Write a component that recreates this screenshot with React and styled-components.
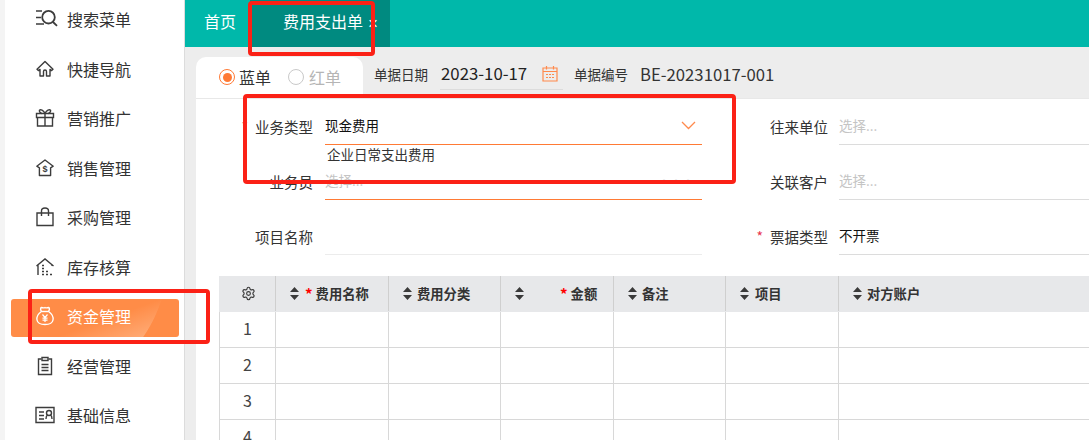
import React from "react";
import styled, { createGlobalStyle } from "styled-components";
import { Settings } from "lucide-react";

const Global = createGlobalStyle`
  html, body { margin: 0; padding: 0; height: 440px; overflow: hidden; background: #ededed; }
  * { box-sizing: border-box; }
  body { font-family: "Noto Sans CJK SC", "Liberation Sans", sans-serif; color: #333; }
`;

const Shell = styled.div`
  position: relative;
  display: flex;
  width: 1089px;
  height: 440px;
  overflow: hidden;
`;
const Sidebar = styled.aside`
  flex: 0 0 185px;
  height: 440px;
  border-left: 5px solid #f4f4f4;
  border-right: 1px solid #dcdcdc;
  background: #fff;
  overflow: hidden;
`;
const Menu = styled.nav`
  display: flex;
  flex-direction: column;
  margin-top: -4px;
  padding: 0 5px 0 6px;
`;
const MenuItem = styled.div`
  position: relative;
  display: flex;
  align-items: center;
  height: 49.5px;
  padding: 0 0 3px 24px;
  gap: 12px;
  font-size: 16px;
  color: ${(p) => (p.$active ? "#fff" : "#333")};
  &::before {
    content: "";
    display: ${(p) => (p.$active ? "block" : "none")};
    position: absolute;
    left: 0;
    right: 0;
    top: 5.5px;
    bottom: 5.5px;
    border-radius: 3px;
    background:
      radial-gradient(circle 137px at 20px -40px, transparent 99.4%, #ff8c47 100%),
      linear-gradient(160deg, #ff8c47 55%, #ffab76 88%);
  }
`;
const MenuIcon = styled.svg`
  position: relative;
  flex: 0 0 20px;
  width: 20px;
  height: 20px;
  fill: none;
  overflow: visible;
  stroke: ${(p) => (p.$active ? "#fff" : "#3c3c3c")};
  stroke-width: 1.4;
`;
const MenuText = styled.span`
  position: relative;
`;

const Main = styled.main`
  flex: 1;
  min-width: 0;
  display: flex;
  flex-direction: column;
`;
const TopBar = styled.header`
  flex: 0 0 46px;
  display: flex;
  background: #00b8aa;
  color: #fff;
  font-size: 16px;
`;
const HomeTab = styled.div`
  width: 65px;
  padding-left: 19px;
  line-height: 43px;
`;
const ActiveTab = styled.div`
  width: 140px;
  display: flex;
  gap: 5px;
  padding-left: 33px;
  line-height: 43px;
  background: #008a80;
`;
const TabClose = styled.span`
  font-family: "Liberation Sans", sans-serif;
  font-size: 17px;
  line-height: 47px;
`;
const Content = styled.div`
  flex: 1;
  min-height: 0;
  padding: 10px 0 0 11px;
  display: flex;
  flex-direction: column;
`;
const HeadRow = styled.div`
  flex: 0 0 42px;
  display: flex;
  align-items: flex-start;
`;
const RadioTabs = styled.div`
  width: 167px;
  height: 42px;
  display: flex;
  align-items: center;
  padding: 0 0 2px 23px;
  background: #fff;
  border-radius: 10px 10px 0 0;
`;
const RadioDot = styled.span`
  position: relative;
  width: 16px;
  height: 16px;
  border-radius: 50%;
  border: 1px solid ${(p) => (p.$on ? "#ff7a35" : "#c9c9c9")};
  margin-right: ${(p) => (p.$on ? 4 : 5)}px;
  &::after {
    content: "";
    display: ${(p) => (p.$on ? "block" : "none")};
    position: absolute;
    inset: 2.5px;
    border-radius: 50%;
    background: #ff7a35;
  }
`;
const RadioLabel = styled.span`
  font-size: 16px;
  width: ${(p) => (p.$on ? "49px" : "auto")};
  color: ${(p) => (p.$on ? "#333" : "#b5b5b5")};
`;
const HeadLabel = styled.span`
  font-size: 13.5px;
  line-height: 34px;
  color: #333;
  margin-left: ${(p) => p.$left || 11}px;
`;
const DateBox = styled.div`
  width: 123px;
  height: 33px;
  margin-left: 12px;
  padding-left: 1px;
  display: flex;
  align-items: center;
  gap: 15px;
  border-bottom: 1px solid #dcdcdc;
  font-size: 16.8px;
  color: #222;
`;
const CodeValue = styled.span`
  margin-left: 12px;
  font-size: 16.7px;
  line-height: 34px;
  color: #333;
`;
const Panel = styled.section`
  flex: 1;
  min-height: 0;
  background: #fff;
  border-top: 1px solid #e8e8e8;
  margin-top: -1px;
  overflow: hidden;
`;
const Form = styled.div`
  display: grid;
  grid-template-columns: 129px 377px 137px 1fr;
  grid-auto-rows: 35px;
  row-gap: 20px;
  padding-top: 11px;
`;
const FieldLabel = styled.label`
  display: flex;
  justify-content: flex-end;
  align-items: center;
  gap: 7px;
  padding: 0 ${(p) => p.$pr || 12}px 2px 0;
  font-size: 14.5px;
  color: #333;
  line-height: 33px;
`;
const Star = styled.span`
  color: #e8344e;
  font-size: 14px;
`;
const Field = styled.div`
  position: relative;
  display: flex;
  align-items: center;
  justify-content: space-between;
  padding: 0 6px 4px 0;
  font-size: 13.5px;
  color: #111;
  border-bottom: 1px solid ${(p) => (p.$focus ? "#ff7a35" : p.$light ? "#ececec" : "#dcdcdc")};
`;
const Placeholder = styled.span`
  color: #c4c4c4;
  font-size: 13.5px;
`;
const Hint = styled.div`
  position: absolute;
  left: 2px;
  top: 34px;
  font-size: 13.5px;
  line-height: 20px;
  color: #333;
`;
const Dots = styled.span`
  color: #d8d8d8;
  font-size: 12px;
  margin-right: 2px;
`;
const Table = styled.table`
  margin: 21px 0 0 23px;
  width: 870px;
  table-layout: fixed;
  border-collapse: collapse;
`;
const Th = styled.th`
  height: 35px;
  padding: 0 0 0 14px;
  background: #e7e8ea;
  border-left: 1px solid ${(p) => (p.$first ? "#e7e8ea" : "#cfcfcf")};
  border-bottom: 1px solid #e7e8ea;
  font-size: 13.3px;
  font-weight: 700;
  color: #333;
  text-align: left;
  white-space: nowrap;
`;
const ThInner = styled.span`
  display: flex;
  align-items: center;
`;
const GearWrap = styled.span`
  display: flex;
  margin-left: 7px;
  color: #3a3a3a;
`;
const ThLabelGap = styled.span`
  margin-left: ${(p) => p.$gap}px;
`;
const Req = styled.span`
  color: #f00;
  font-size: 15px;
  margin: 0 3px 0 6px;
`;
const Td = styled.td`
  height: 36px;
  border: 1px solid #d8d8d8;
  border-top: 0;
  font-size: 16px;
  text-align: center;
  color: #444;
  padding: 0 0 2px;
`;
const SortIcon = styled.svg`
  flex: 0 0 9px;
  width: 9px;
  height: 13px;
  fill: #3a3a3a;
`;
const Note = styled.div`
  position: absolute;
  left: ${(p) => p.$x}px;
  top: ${(p) => p.$y}px;
  width: ${(p) => p.$w}px;
  height: ${(p) => p.$h}px;
  border: 4px solid #fb2116;
  border-radius: 4px;
  pointer-events: none;
`;

const icons = {
  search: (
    <>
      <path d="M1 2h6M1 8.500h5M1 15h8" strokeWidth="1.700" />
      <circle cx="13.500" cy="8.200" r="6.300" strokeWidth="1.800" />
      <path d="M18 13l4 3.800" strokeWidth="1.800" />
    </>
  ),
  home: (
    <path d="M10 2.500L2 10.200l1.600 1.400 1.400-1.200V17h3.500v-4.500a1.500 1.500 0 013 0V17H15v-6.600l1.400 1.200 1.600-1.400z" strokeLinejoin="round" />
  ),
  gift: (
    <>
      <path d="M1.500 5.500h17v4h-17zM2.500 9.500h15v8.500h-15zM10 5.500V18" />
      <path d="M10 5.500C8.500 2 5.500 1 4.500 2.200 3.800 3.400 5.500 5.200 7 5.500M10 5.500c1.500-3.500 4.500-4.500 5.500-3.300.7 1.200-1 3-2.500 3.300" />
    </>
  ),
  sale: (
    <>
      <path d="M10 2L1.800 8.200l2.600 1.600V17.500h11.200V9.800l2.600-1.600z" strokeLinejoin="round" />
      <text x="10" y="13.800" fontSize="9" fontWeight="700" textAnchor="middle" fill="#3c3c3c" stroke="none" fontFamily="Liberation Sans, sans-serif">$</text>
    </>
  ),
  bag: (
    <>
      <path d="M2 6h16v12.500H2z" />
      <path d="M6.500 9V4a3.500 3 0 017 0v5" />
    </>
  ),
  stock: (
    <>
      <path d="M1.500 9L10 2l8.500 7M3 8v10M17 8v1" />
      <path d="M7 8.500h2M7 11.500h2M7 14.500h2M7 17.500h2M11 14.500h2M11 17.500h2M15 17.500h2" strokeWidth="1.600" />
    </>
  ),
  money: (
    <>
      <path d="M6.500 5.500C5.500 4 5 2 6.500 1.500c1.200 0 2 1 3.500 0 1.500 1 2.300 0 3.500 0C15 2 14.500 4 13.500 5.500c3 2 5 5.500 4.500 8.500-.5 3-3 4.500-8 4.500S2.500 17 2 14c-.5-3 1.500-6.500 4.500-8.500z" strokeLinejoin="round" />
      <path d="M7 5.500h6" />
      <path d="M7.500 8.500l2.500 3 2.500-3M10 11.500V16M7.500 12.200h5M7.500 14.200h5" strokeWidth="1.200" />
    </>
  ),
  report: (
    <>
      <path d="M6.500 3H3.500v15.500h13V3h-3" />
      <path d="M7 1.500h6v3H7z" />
      <path d="M6.500 8.500h7M6.500 11.500h7M6.500 14.500h7" strokeWidth="1.500" />
    </>
  ),
  info: (
    <>
      <path d="M1 2.500h18v15H1z" />
      <path d="M4 7h5M4 10.500h5M4 14h5" />
      <circle cx="14" cy="8" r="2.500" />
      <path d="M11 14c0-2 .8-3.500 1.500-4M17 14c0-2-.8-3.500-1.500-4" />
    </>
  ),
};

const menu = [
  ["search", "搜索菜单"],
  ["home", "快捷导航"],
  ["gift", "营销推广"],
  ["sale", "销售管理"],
  ["bag", "采购管理"],
  ["stock", "库存核算"],
  ["money", "资金管理", true],
  ["report", "经营管理"],
  ["info", "基础信息"],
];

const Sort = () => (
  <SortIcon viewBox="0 0 9 13">
    <path d="M4.500 0L9 5H0zM4.500 13L0 8h9z" />
  </SortIcon>
);

const columns = [
  { w: 113, label: "费用名称", req: true },
  { w: 112, label: "费用分类", gap: 5 },
  { w: 113, label: "金额", req: true, gap: 30 },
  { w: 112, label: "备注", gap: 5 },
  { w: 113, label: "项目", gap: 6 },
  { w: 251, label: "对方账户", gap: 5 },
];

export default function App() {
  return (
    <Shell>
      <Global />
      <Sidebar>
        <Menu>
          {menu.map(([icon, label, active]) => (
            <MenuItem key={label} $active={active}>
              <MenuIcon viewBox="0 0 20 20" $active={active}>
                {icons[icon]}
              </MenuIcon>
              <MenuText>{label}</MenuText>
            </MenuItem>
          ))}
        </Menu>
      </Sidebar>
      <Main>
        <TopBar>
          <HomeTab>首页</HomeTab>
          <ActiveTab>
            费用支出单
            <TabClose>×</TabClose>
          </ActiveTab>
        </TopBar>
        <Content>
          <HeadRow>
            <RadioTabs>
              <RadioDot $on />
              <RadioLabel $on>蓝单</RadioLabel>
              <RadioDot />
              <RadioLabel>红单</RadioLabel>
            </RadioTabs>
            <HeadLabel>单据日期</HeadLabel>
            <DateBox>
              2023-10-17
              <svg width="16" height="17" viewBox="0 0 16 17" fill="none" stroke="#ff8a4d" strokeWidth="1.200">
                <path d="M1 3h14v13H1zM1 6.500h14M4.500 1v3.500M11.500 1v3.500M4 9.500h2M7 9.500h2M10 9.500h2M4 12.500h2M7 12.500h2M10 12.500h2" />
              </svg>
            </DateBox>
            <HeadLabel>单据编号</HeadLabel>
            <CodeValue>BE-20231017-001</CodeValue>
          </HeadRow>
          <Panel>
            <Form>
              <FieldLabel>
                <Star>*</Star>业务类型
              </FieldLabel>
              <Field $focus>
                现金费用
                <svg width="15" height="9" viewBox="0 0 15 9" fill="none" stroke="#ff8a4d" strokeWidth="1.300">
                  <path d="M1 1l6.500 6.500L14 1" />
                </svg>
                <Hint>企业日常支出费用</Hint>
              </Field>
              <FieldLabel $pr={11}>往来单位</FieldLabel>
              <Field>
                <Placeholder>选择...</Placeholder>
              </Field>
              <FieldLabel>业务员</FieldLabel>
              <Field $focus>
                <Placeholder>选择...</Placeholder>
                <Dots>···</Dots>
              </Field>
              <FieldLabel $pr={11}>关联客户</FieldLabel>
              <Field>
                <Placeholder>选择...</Placeholder>
              </Field>
              <FieldLabel>项目名称</FieldLabel>
              <Field $light />
              <FieldLabel $pr={11}>
                <Star>*</Star>票据类型
              </FieldLabel>
              <Field>不开票</Field>
            </Form>
            <Table>
              <colgroup>
                <col width="56" />
                {columns.map((c) => (
                  <col key={c.label} width={c.w} />
                ))}
              </colgroup>
              <thead>
                <tr>
                  <Th $first>
                    <ThInner>
                      <GearWrap>
                        <Settings size={15} strokeWidth={1.8} />
                      </GearWrap>
                    </ThInner>
                  </Th>
                  {columns.map((c) => (
                    <Th key={c.label}>
                      <ThInner>
                        <Sort />
                        {c.req && !c.gap && <Req>*</Req>}
                        {c.req && c.gap && (
                          <ThLabelGap $gap={c.gap}>
                            <Req>*</Req>
                          </ThLabelGap>
                        )}
                        {c.req ? c.label : <ThLabelGap $gap={c.gap}>{c.label}</ThLabelGap>}
                      </ThInner>
                    </Th>
                  ))}
                </tr>
              </thead>
              <tbody>
                {[1, 2, 3, 4].map((n) => (
                  <tr key={n}>
                    <Td>{n}</Td>
                    {columns.map((c) => (
                      <Td key={c.label} />
                    ))}
                  </tr>
                ))}
              </tbody>
            </Table>
          </Panel>
        </Content>
      </Main>
      <Note $x={248} $y={1} $w={127} $h={55} />
      <Note $x={243} $y={94} $w={493} $h={90} />
      <Note $x={28} $y={289} $w={182} $h={55} />
    </Shell>
  );
}
